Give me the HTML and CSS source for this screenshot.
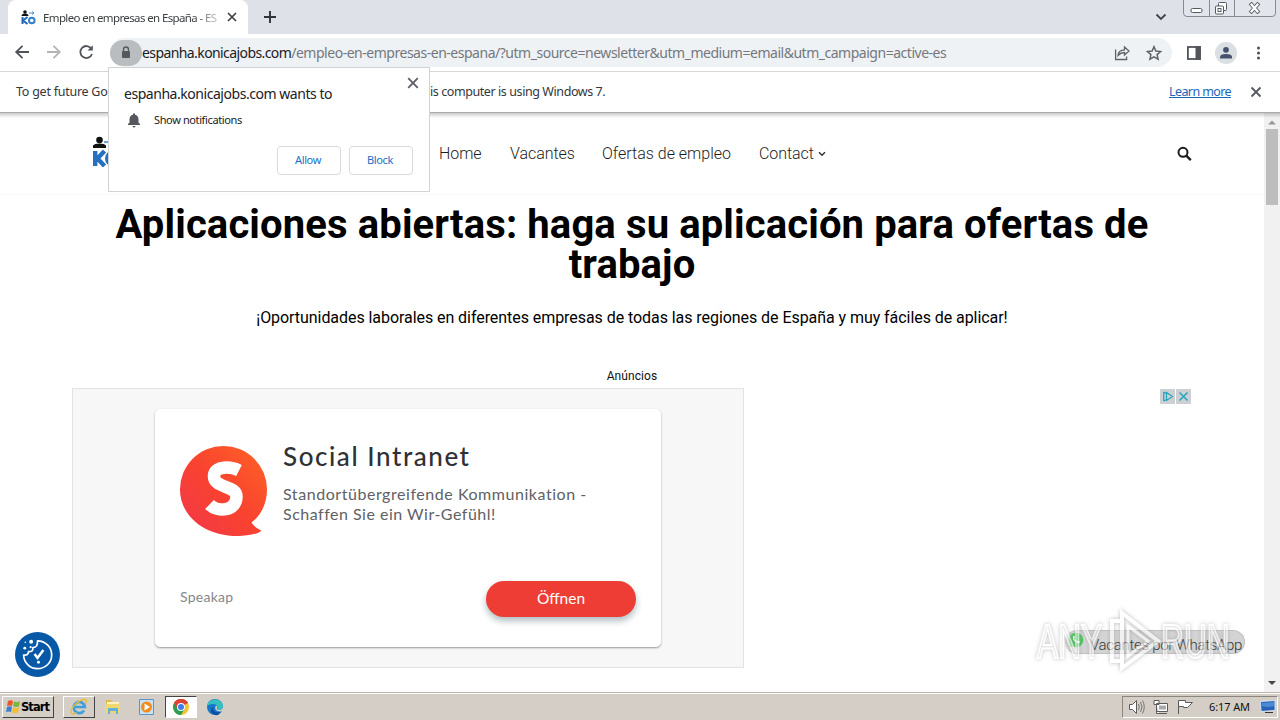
FILE: index.html
```html
<!DOCTYPE html>
<html lang="es">
<head>
<meta charset="utf-8">
<title>Empleo en empresas en España</title>
<link rel="stylesheet" href="styles.css">
</head>
<body>
<div class="desktop">
  <header class="tabstrip">
    <div class="tab">
      <svg class="favicon" width="15" height="15" viewBox="0 0 15 15"><circle cx="4" cy="2" r="1.800" fill="#111"/><path d="M0.500 6q0-2.500 3.500-2.500T7.500 6z" fill="#111"/><path d="M8 3h5M11 1.500L13 3l-2 1.500" stroke="#4b9ad5" fill="none"/><path d="M1.500 7v7M6.500 7L2 10.500l4.500 3.500" stroke="#2469b5" stroke-width="2" fill="none"/><circle cx="10.800" cy="10.500" r="2.800" stroke="#3181c8" stroke-width="2" fill="none"/></svg>
      <span class="tab-title">Empleo en empresas en España - ES</span>
      <svg class="tab-close" width="10" height="10" viewBox="0 0 10 10"><path d="M1 1l8 8M9 1l-8 8" stroke="#3c4043" stroke-width="1.700"/></svg>
    </div>
    <svg class="new-tab" width="12" height="12" viewBox="0 0 12 12"><path d="M6 0v12M0 6h12" stroke="#30343a" stroke-width="1.900"/></svg>
    <svg class="tab-search" width="12" height="8" viewBox="0 0 12 8"><path d="M1.500 1.500L6 6l4.500-4.500" fill="none" stroke="#40444a" stroke-width="1.800"/></svg>
    <svg class="win-buttons" width="94" height="18" viewBox="0 0 94 18"><path d="M.5 0v13q0 3.500 3.500 3.500h85q3.500 0 3.500-3.500V0" fill="#e2e6ec" stroke="#858b94"/><path d="M26.500 0v16M51.500 0v16" stroke="#858b94"/><rect x="8" y="8.500" width="11" height="4" rx="1.500" fill="#fff" stroke="#555a62"/><rect x="35.500" y="2.500" width="8" height="8" rx="1" fill="#fff" stroke="#555a62"/><rect x="32.500" y="6" width="8" height="8" rx="1" fill="#fff" stroke="#555a62"/><rect x="35" y="8.500" width="3" height="3" fill="#fff" stroke="#555a62"/><path d="M68.500 4.500l6 7M74.500 4.500l-6 7" stroke="#555a62" stroke-width="4" stroke-linecap="square"/><path d="M68.500 4.500l6 7M74.500 4.500l-6 7" stroke="#fff" stroke-width="2.300" stroke-linecap="square"/></svg>
  </header>

  <div class="toolbar">
    <svg class="nav-icons" width="110" height="38" viewBox="0 0 110 38" fill="none" stroke-width="1.800"><path d="M29 18H16.500M22.500 11.800L16.200 18l6.300 6.200" stroke="#505357"/><path d="M47 18h12.500M53.500 11.800L59.800 18l-6.300 6.200" stroke="#b2b4b7"/><path d="M91.400 14.800A6 6 0 1 0 92 20" stroke="#505357"/><path d="M92.800 11.300v5.200h-5.200z" fill="#505357"/></svg>
    <div class="omnibox">
      <span class="lock"><svg width="10" height="13" viewBox="0 0 10 13"><path d="M2.500 5.500V3.500a2.500 2.500 0 0 1 5 0v2" fill="none" stroke="#55585b" stroke-width="1.300"/><rect x="1" y="5" width="8" height="7" rx="1" fill="#55585b"/></svg></span>
      <span class="url"><span class="host">espanha.konicajobs.com</span><span class="path">/empleo-en-empresas-en-espana/?utm_source=newsletter&amp;utm_medium=email&amp;utm_campaign=active-es</span></span>
      <svg class="share" width="52" height="20" viewBox="0 0 52 20" fill="none" stroke="#5f6368" stroke-width="1.300"><path d="M2.600 6.500v10h11v-3M5 12.500q.5-5.500 6.500-5.700V4l4.500 4-4.500 4V9.500Q8 9.300 5 12.500z"/><path d="M41 3.700l1.900 4.300 4.700.5-3.500 3.100 1 4.600-4.100-2.400-4.100 2.400 1-4.600-3.500-3.100 4.700-.5z" stroke-width="1.500"/></svg>
    </div>
    <svg class="bar-icons" width="84" height="28" viewBox="0 0 84 28"><rect x="1.900" y="8" width="12" height="12" fill="#fff" stroke="#515459" stroke-width="1.800"/><path d="M9.500 7h5.300v14H9.500z" fill="#515459"/><circle cx="40" cy="14" r="11" fill="#dadfe4"/><circle cx="40" cy="10.800" r="2.900" fill="#46536f"/><path d="M34 19.500v-1.500q0-3 6-3t6 3v1.500z" fill="#46536f"/><g fill="#4d5054"><circle cx="72.500" cy="9" r="1.500"/><circle cx="72.500" cy="14" r="1.500"/><circle cx="72.500" cy="19" r="1.500"/></g></svg>
  </div>

  <div class="infobar">
    <span class="info-text"><span class="info-start">To get future Google Chrome updates, you'll need Windows 10 or later. Th</span><span class="info-end">is computer is using Windows 7.</span></span>
    <a class="learn">Learn more</a>
    <svg width="12" height="12" viewBox="0 0 12 12"><path d="M1.500 1.500l9 9M10.500 1.500l-9 9" stroke="#55585c" stroke-width="1.800"/></svg>
  </div>

  <div class="viewport">
    <main class="page">
      <div class="site-header">
        <svg class="logo" width="40" height="32" viewBox="0 0 40 32"><circle cx="7.500" cy="5" r="3.300" fill="#111"/><path d="M1 13V10.500q1.500-2 6.500-2t6.500 2V13z" fill="#111"/><path d="M12 7h10" stroke="#3a87c9" stroke-width="1.500"/><path d="M3.200 16v15M12.500 16l-7 7.500 7 7.500" fill="none" stroke="#2671bf" stroke-width="4.400"/><circle cx="21" cy="23.500" r="6" fill="none" stroke="#2671bf" stroke-width="4"/></svg>
        <nav class="menu">
          <a class="m-home">Home</a><a class="m-vac">Vacantes</a><a class="m-of">Ofertas de empleo</a><a class="m-con">Contact</a>
          <svg width="8" height="6" viewBox="0 0 8 6"><path d="M1 1.200l3 3 3-3" fill="none" stroke="#333" stroke-width="1.500"/></svg>
        </nav>
        <svg class="search" width="15" height="15" viewBox="0 0 15 15"><circle cx="6" cy="6.300" r="4.500" fill="none" stroke="#1b1b1b" stroke-width="2"/><path d="M9.300 9.600l4.500 4.500" stroke="#1b1b1b" stroke-width="2.400"/></svg>
      </div>
      <h1>Aplicaciones abiertas: haga su aplicación para ofertas de<br>trabajo</h1>
      <p class="lead"><span>¡Oportunidades laborales en diferentes empresas de todas las regiones de España y muy fáciles de aplicar!</span></p>
      <p class="ad-label">Anúncios</p>
      <section class="ads">
        <div class="ad">
          <article class="card">
            <div class="card-top">
              <svg class="brand" width="88" height="91" viewBox="0 0 88 91"><defs><linearGradient id="g" x1="0" y1="1" x2="1" y2="0"><stop offset="0" stop-color="#f2364b"/><stop offset=".5" stop-color="#f9432f"/><stop offset="1" stop-color="#ff6426"/></linearGradient></defs><path d="M43.500 0a43.500 43.500 0 0 1 43.500 43.500c0 14-6 26-15.500 33q3 5 10 8.200-5 4.500-22 5.300C25 91 0 70 0 43.500A43.500 43.500 0 0 1 43.500 0z" fill="url(#g)"/><path d="M59 24.500C51 20.500 35 19.500 34 29.500c-.8 13 22.500 9.500 22.500 21 0 15-19 16-27 8" fill="none" stroke="#fff" stroke-width="12.500"/></svg>
              <div class="copy">
                <h2>Social Intranet</h2>
                <p><span class="c1">Standortübergreifende Kommunikation -</span><br><span class="c2">Schaffen Sie ein Wir-Gefühl!</span></p>
              </div>
            </div>
            <div class="card-foot"><span class="seller">Speakap</span><a class="open">Öffnen</a></div>
          </article>
        </div>
        <svg class="adchoices" width="31" height="15" viewBox="0 0 31 15"><path d="M0 0h15v15H0zM16 0h15v15H16z" fill="#ccd0d2"/><path d="M3.700 3v9M3.700 3l3.500 2M3.700 12l3.500-2M6.500 3.500l6 4-6 4z" fill="none" stroke="#24a5bf" stroke-width="1.200"/><path d="M19.500 3.500l8 8M27.500 3.500l-8 8" stroke="#24a5bf" stroke-width="1.500"/></svg>
      </section>
    </main>
    <div class="scrollbar">
      <svg width="8" height="5" viewBox="0 0 8 5"><path d="M0 4.500L4 .5l4 4z" fill="#999"/></svg>
      <i class="thumb"></i>
      <svg width="8" height="5" viewBox="0 0 8 5"><path d="M0 0l4 4 4-4z" fill="#444"/></svg>
    </div>
    <i class="top-shade"></i>

    <svg class="cookie" width="45" height="45" viewBox="0 0 46 46"><circle cx="23" cy="23" r="23" fill="#0758a7"/><path d="M23 9c8 0 14.500 6.500 14.500 14.500S31 37.500 23 37.500 9 31 8.800 23.500c3 .5 5-.8 5-3.500 3 .5 5-1 4.500-4 3.500 0 5-2.500 4.700-7z" fill="none" stroke="#fff" stroke-width="1.700" stroke-linejoin="round"/><path d="M20 22.500l3 4 6-8" fill="none" stroke="#fff" stroke-width="2.600"/><g fill="#fff"><circle cx="16.500" cy="10" r="2"/><circle cx="10" cy="16.500" r="1.500"/><circle cx="16" cy="15.500" r="1.100"/><circle cx="10.500" cy="10.500" r=".8"/><circle cx="24" cy="31" r="1.500"/></g></svg>

    <div class="whatsapp">
      <svg width="16" height="16" viewBox="0 0 16 16"><circle cx="8" cy="8" r="7.300" fill="#4ac65c"/><path d="M1 15l1-4 3 3z" fill="#4ac65c"/><path d="M5 4.500q-1 5 6 7l1-2-2-1-1 1-3-3 1-1-.5-2z" fill="#fff"/></svg>
      <span>Vacantes por WhatsApp</span>
    </div>
    <div class="watermark">
      <span class="any">ANY</span>
      <svg width="54" height="66" viewBox="0 0 54 66" fill="none" stroke="#fff"><path d="M5 53V13h10v40zM15 5v55L51 33z" stroke-width="4"/><path d="M21 18l20 15-20 15z" stroke-width="3"/></svg>
      <span class="run">RUN</span>
    </div>
  </div>

  <footer class="taskbar">
    <div class="start"><svg width="16" height="16" viewBox="0 0 16 16"><path d="M3 2q3-1.500 5 0L7 7q-2.500-1.200-5 0z" fill="#e8562d"/><path d="M9 2.500q3 1 6-.5l-1 5.500q-3 1-6-.2z" fill="#78b83e"/><path d="M2 8q2.500-1.500 5 0l-1 5q-2.500-1.200-5 0z" fill="#3a80cf"/><path d="M8 8.500q3 1.200 6 0l-1 5q-3 1.300-6 0z" fill="#f7bd2c"/></svg><b>Start</b></div>
    <div class="task ie"><svg width="18" height="18" viewBox="0 0 18 18"><path d="M14 12.500a5.600 5.600 0 1 1 .8-3.500H5" fill="none" stroke="#3f9edc" stroke-width="2.700"/><path d="M1.500 15.500C-1 11 9 1 15 1.500q3 .5 0 4.500M1.500 15.500q2 1.500 5-1" fill="none" stroke="#e9bd32" stroke-width="1.400"/></svg></div>
    <svg class="quick q1" width="18" height="18" viewBox="0 0 18 18"><path d="M2 2h5l1 2h7v9H2z" fill="#dcbc50"/><path d="M3 4h12v3H3z" fill="#fff3b8"/><path d="M1 6h15v9H1z" fill="#efd872"/><path d="M4 16v-6h10v6h-2v-3H6v3z" fill="#62b1dc"/></svg>
    <svg class="quick q2" width="18" height="18" viewBox="0 0 18 18"><path d="M1.500 1.500h14v15h-14z" fill="#c8e3f5" stroke="#5c96c9"/><circle cx="8.500" cy="9" r="5.500" fill="#f38b1d"/><path d="M6.500 5.500v7l5.500-3.500z" fill="#fff"/></svg>
    <div class="task active"><svg width="18" height="18" viewBox="0 0 18 18"><circle cx="9" cy="9" r="8" fill="#f4c430"/><path d="M9 9L2.070 5A8 8 0 0 1 15.930 5z" fill="#dd4237"/><path d="M2.070 5A8 8 0 0 0 9 17l3.500-6L9 9z" fill="#2c9e50"/><path d="M9 5h6.930A8 8 0 0 0 2.070 5L5.500 11z" fill="#dd4237"/><circle cx="9" cy="9" r="4" fill="#fff"/><circle cx="9" cy="9" r="3" fill="#3b7de9"/></svg></div>
    <svg class="quick edge" width="18" height="18" viewBox="0 0 18 18"><circle cx="9" cy="9" r="8" fill="#1577c8"/><path d="M1 8C2 0 16-1 17 8c0 4-4 5-6 3 2-4-3-7-10-3z" fill="#35bfc0"/><path d="M7 9c-1 4 3 6 8 5l-3 3C7 18 2 13 7 9z" fill="#0b4f9e"/><path d="M10 7.500c2 1 1 3 .5 3.500 2 2 6 1 6.500-1.500l1 3-4 1c-4 0-6-3-4-6z" fill="#d5cfc7"/></svg>
    <div class="tray">
      <svg width="72" height="18" viewBox="0 0 72 18" fill="#fff" stroke="#5b5b5b"><path d="M1.500 6.500h3l4-4v13l-4-4h-3z"/><path d="M10.500 6q1.500 3 0 6M12.500 4q3 5 0 10M14.500 2.500q3.500 6.500 0 13" fill="none" stroke="#777"/><path d="M28.500 5.500h11v8h-11zM31 15.500h8M26 2.500h5v4h-5zM28.500 7v8.500h3"/><path d="M31 7.500h7v4h-7z" fill="#aaa" stroke="none"/><path d="M50.500 16V2.500h7v2h7q-3 3-5 5h-4v-1h-5"/></svg>
      <span class="clock">6:17 AM</span>
      <svg width="16" height="14" viewBox="0 0 16 14"><path d="M.5 1.500L15 .5v10L1 11.500z" fill="#2862b4" stroke="#d4e4f5"/><path d="M2 3l12-1v4Q8 8 2 6z" fill="#4b8ad5"/><path d="M5 12.500h8" stroke="#333"/></svg>
    </div>
  </footer>

  <div class="popup">
    <div class="popup-head"><span class="popup-title">espanha.konicajobs.com wants to</span><svg width="12" height="12" viewBox="0 0 12 12"><path d="M1.200 1.200l9.600 9.600M10.800 1.200l-9.600 9.600" stroke="#5b5e62" stroke-width="1.800"/></svg></div>
    <div class="permission"><svg width="12" height="15" viewBox="0 0 12 15"><path d="M0 12v-1l1.500-1.500V6A4.500 4.500 0 0 1 5 1.800V.5h2v1.300A4.500 4.500 0 0 1 10.500 6v3.500L12 11v1zM4.500 13h3q-.3 1.500-1.500 1.500T4.500 13z" fill="#55585c"/></svg><span>Show notifications</span></div>
    <div class="popup-actions"><button>Allow</button><button>Block</button></div>
  </div>
</div>
</body>
</html>
```
FILE: styles.css
```css
* { box-sizing: border-box; }
body { margin: 0; }
h1, h2, p { margin: 0; font-weight: normal; }
svg { flex: none; display: block; }
.desktop { position: relative; width: 1280px; height: 720px; overflow: hidden; display: flex; flex-direction: column; background: #fff; font-family: "Noto Sans", sans-serif; white-space: nowrap; }

.tabstrip { height: 34px; flex: none; background: #dee1e7; display: flex; align-items: center; }
.tab { width: 240px; height: 34px; margin-left: 8px; padding: 0 11px 0 13px; background: #fff; border-radius: 8px 8px 0 0; display: flex; align-items: center; }
.tab-title { width: 176px; margin-left: 7px; font-size: 11.5px; letter-spacing: -0.62px; color: #3c4043; -webkit-mask-image: linear-gradient(90deg, #000 150px, rgba(0,0,0,.3) 174px); mask-image: linear-gradient(90deg, #000 150px, rgba(0,0,0,.3) 174px); }
.tab-close { margin-left: auto; }
.new-tab { margin-left: 16px; }
.tab-search { margin-left: auto; }
.win-buttons { margin: 0 3px 0 16px; align-self: flex-start; }

.toolbar { height: 38px; flex: none; display: flex; align-items: center; border-bottom: 1px solid #d6d7d9; }
.omnibox { width: 1062px; height: 29px; border-radius: 15px; background: #eff2f5; display: flex; align-items: center; }
.lock { width: 32px; height: 26px; border-radius: 13px; background: #babdbf; display: flex; align-items: center; justify-content: center; }
.url { font-size: 14px; color: #74787d; }
.host { color: #202124; letter-spacing: -0.59px; }
.path { letter-spacing: -0.48px; }
.share { margin: 0 7px 0 auto; }
.bar-icons { margin-left: 14px; }

.infobar { height: 41px; flex: none; padding: 0 18px 2px 16px; display: flex; align-items: center; border-bottom: 1px solid #aaa; font-size: 12.5px; color: #35373a; }
.info-text { display: flex; }
.info-start { width: 414px; letter-spacing: -0.25px; }
.info-end { letter-spacing: -0.42px; }
.infobar svg { margin-top: 2px; }
.learn { margin: 0 19px 0 auto; color: #1a66b8; text-decoration: underline; letter-spacing: -0.6px; }

.viewport { position: relative; height: 579px; flex: none; display: flex; }
.top-shade { position: absolute; left: 0; top: 0; width: 1280px; height: 5px; background: linear-gradient(rgba(0,0,0,.2), rgba(0,0,0,0)); }
.page { width: 1264px; }
.site-header { height: 82px; border-bottom: 1px solid #f7f7f7; padding: 0 72px 0 92px; display: flex; align-items: center; }
.logo { margin-top: -6px; }
.menu { margin-left: 307px; display: flex; align-items: center; font: 300 16px Roboto, sans-serif; letter-spacing: -0.06px; color: #1d1d1d; }
.m-home { width: 71px; }
.m-vac { width: 92px; }
.m-of { width: 157px; letter-spacing: 0; }
.m-con { width: 59px; }
.search { margin-left: auto; }
h1 { margin-top: 10px; text-align: center; font: 700 40px/40px Roboto, sans-serif; letter-spacing: 0.12px; color: #000; }
.lead { margin-top: 23px; height: 20px; text-align: center; font: 400 16px/20px Roboto, sans-serif; letter-spacing: -0.06px; color: #000; }
.ad-label { margin-top: 39px; height: 18px; text-align: center; font: 400 12px/18px Roboto, sans-serif; letter-spacing: 0.1px; color: #111; }
.ads { margin: 3px 73px 0 72px; display: flex; justify-content: space-between; align-items: flex-start; }
.ad { width: 672px; height: 280px; padding: 20px 82px; border: 1px solid #e3e3e3; background: #f7f7f7; }
.card { width: 506px; height: 238px; padding: 37px 25px 30px; border-radius: 5px; background: #fff; box-shadow: 0 1px 2px #999; display: flex; flex-direction: column; justify-content: space-between; }
.card-top { display: flex; gap: 15px; }
.copy h2 { margin-top: -7px; font: 500 26px/34px Lato, sans-serif; letter-spacing: 1.55px; color: #303134; }
.copy p { margin-top: 11px; font: 400 16px/20px Lato, sans-serif; color: #606164; }
.c1 { letter-spacing: 0.55px; }
.c2 { letter-spacing: 0.5px; }
.card-foot { display: flex; justify-content: space-between; }
.seller { padding-top: 7px; font: 400 14px/18px Lato, sans-serif; letter-spacing: 0.25px; color: #858789; }
.open { width: 150px; height: 36px; border-radius: 18px; background: #ee3d34; color: #fff; font: 400 15.500px/34px Lato, sans-serif; text-align: center; box-shadow: 0 4px 7px #b0bdc1; }
.adchoices { margin-top: 1px; }
.scrollbar { width: 16px; padding: 7px 2px 6px; background: #f1f1f1; display: flex; flex-direction: column; align-items: center; }
.thumb { width: 12px; height: 76px; margin: 4px 0 auto; background: #bdbdbd; }

.cookie { position: absolute; left: 15px; top: 519px; }
.whatsapp { position: absolute; left: 1065px; top: 517px; width: 180px; height: 24px; border: 1px solid #c0c0c0; border-left-color: #ddd; border-radius: 12px; background: #d4d4d4; display: flex; gap: 6px; padding: 0 0 0 2px; font: 300 15px/29px Roboto, sans-serif; letter-spacing: -0.3px; color: #333; }
.whatsapp svg { margin-top: 1px; }
.watermark { position: absolute; left: 1037px; top: 495px; display: flex; align-items: center; color: rgba(255,255,255,.5); font: 400 48px "Liberation Sans", sans-serif; filter: drop-shadow(0 0 2px #999); opacity: .65; }
.watermark span { width: 70px; }
.watermark span.run { width: 68px; }
.any, .run { -webkit-text-stroke: 2px #fff; transform: scaleX(.66); transform-origin: left; }

.taskbar { height: 28px; flex: none; padding: 2px 2px 2px; background: #d5cec6; border-top: 1px solid #b9b4ad; box-shadow: inset 0 1px #fff; display: flex; align-items: center; }
.start { width: 52px; height: 22px; padding-left: 2px; border: 1px solid #fff; border-right-color: #404040; border-bottom-color: #404040; display: flex; align-items: center; font: 11.500px "DejaVu Sans", sans-serif; }
.start b { letter-spacing: -0.95px; }
.task { width: 32px; height: 22px; display: flex; align-items: center; justify-content: center; border: 1px solid #fff; border-right-color: #444; border-bottom-color: #444; }
.ie { margin-left: 9px; }
.q1 { margin-left: 9px; }
.q2 { margin: 0 9px 0 16px; }
.active { background: #fff; border-color: #444 #fff #fff #444; }
.edge { margin-left: 9px; }
.tray { width: 156px; height: 22px; margin-left: auto; padding: 0 1px 0 5px; border: 1px solid #fff; border-top-color: #8a857e; border-left-color: #8a857e; display: flex; align-items: center; }
.clock { margin: 0 auto 0 9px; font-size: 11px; letter-spacing: -0.1px; color: #111; }

.popup { position: absolute; left: 108px; top: 67px; width: 322px; height: 125px; padding: 9px 10px 0 15px; background: #fff; border: 1px solid #d2d3d4; color: #202124; }
.popup-head { display: flex; justify-content: space-between; }
.popup-title { padding-top: 7px; font-size: 14px; line-height: 20px; letter-spacing: -0.46px; }
.permission { display: flex; align-items: center; gap: 14px; margin: 8px 0 0 4px; font-size: 11px; line-height: 16px; letter-spacing: -0.38px; }
.popup-actions { display: flex; justify-content: flex-end; gap: 8px; margin: 18px 6px 0 0; }
.popup-actions button { width: 64px; height: 29px; padding: 0 2px 2px 0; border: 1px solid #d7dade; border-radius: 4px; background: #fff; color: #1a6fc4; font: 11px "Noto Sans", sans-serif; letter-spacing: -0.4px; }
```
